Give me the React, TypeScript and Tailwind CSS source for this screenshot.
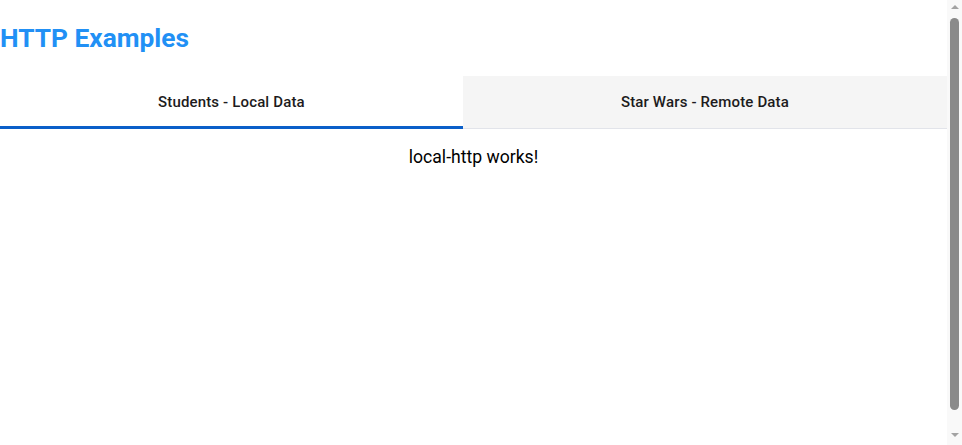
import { useState } from 'react';

const tabs = ['Students - Local Data', 'Star Wars - Remote Data'];

// classic browser scrollbar, drawn since the page in the shot is a little taller than the window
function Scrollbar() {
  return (
    <div className="flex h-[445px] w-[15px] shrink-0 flex-col items-center bg-[#f9f9f9]">
      <div className="mt-[5px] h-0 w-0 border-x-[4px] border-b-[4px] border-x-transparent border-b-[#a3a3a3]" />
      <div className="mt-[9px] h-[392px] w-[9px] rounded-[5px] bg-[#8a8a8a]" />
      <div className="mt-auto mb-[8px] h-0 w-0 border-x-[4px] border-t-[4px] border-x-transparent border-t-[#a3a3a3]" />
    </div>
  );
}

export default function App() {
  const [active, setActive] = useState(0);

  return (
    <div className="flex h-[445px] overflow-hidden bg-white font-['Roboto',sans-serif]">
      <div className="flex-1">
        <h1 className="pt-[23px] pb-[22px] text-[26.3px] leading-[31px] font-bold text-[#2190f5]">HTTP Examples</h1>
        <div className="flex border-b border-[#e2e4ea]">
          {tabs.map((tab, i) => (
            <button
              key={tab}
              onClick={() => setActive(i)}
              className={`relative flex h-[52px] flex-auto items-center justify-center px-6 text-[15px] font-medium tracking-[0.15px] text-[#1d1b20] ${
                i === active ? 'bg-white' : 'bg-[#f5f5f5]'
              }`}
            >
              {tab}
              {i === active && <span className="absolute inset-x-0 bottom-[-1px] h-[3px] bg-[#0b5fc9]" />}
            </button>
          ))}
        </div>
        <p className="pt-[15px] text-center text-[17.6px] leading-[26px] text-black">
          {active === 0 ? 'local-http works!' : 'remote-http works!'}
        </p>
      </div>
      <Scrollbar />
    </div>
  );
}
